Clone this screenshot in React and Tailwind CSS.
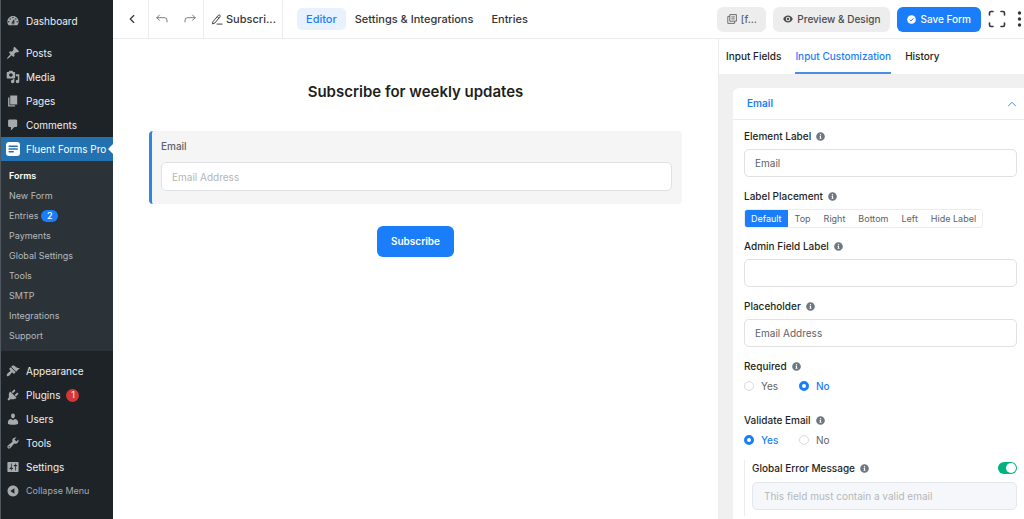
import React, { useState } from "react";
import clsx from "clsx";
import { FaInfoCircle } from "react-icons/fa";
import { FiChevronLeft, FiChevronUp } from "react-icons/fi";

const icons = {
  dashboard:
    "M3.76 16h12.48c1.1-1.37 1.76-3.11 1.76-5 0-4.42-3.58-8-8-8s-8 3.58-8 8c0 1.89.66 3.63 1.76 5zM10 4c.55 0 1 .45 1 1s-.45 1-1 1-1-.45-1-1 .45-1 1-1zM6 6c.55 0 1 .45 1 1s-.45 1-1 1-1-.45-1-1 .45-1 1-1zm8 0c.55 0 1 .45 1 1s-.45 1-1 1-1-.45-1-1 .45-1 1-1zm-5.37 5.55L12 7v6c0 1.1-.9 2-2 2s-2-.9-2-2c0-.57.24-1.08.63-1.45zM4 10c.55 0 1 .45 1 1s-.45 1-1 1-1-.45-1-1 .45-1 1-1zm12 0c.55 0 1 .45 1 1s-.45 1-1 1-1-.45-1-1 .45-1 1-1zm-5 3c0-.55-.45-1-1-1s-1 .45-1 1 .45 1 1 1 1-.45 1-1z",
  posts:
    "M10.44 3.02l1.82-1.82 6.36 6.35-1.83 1.82c-1.05-.68-2.48-.57-3.41.36l-.75.75c-.92.93-1.04 2.35-.35 3.41l-1.83 1.82-2.41-2.41-2.8 2.79c-.42.42-3.38 2.71-3.8 2.29s1.86-3.39 2.28-3.81l2.79-2.79L4.1 9.36l1.83-1.82c1.05.69 2.48.57 3.4-.36l.75-.75c.93-.92 1.05-2.35.36-3.41z",
  media:
    "M13 11V4c0-.55-.45-1-1-1h-1.67L9 1H5L3.67 3H2c-.55 0-1 .45-1 1v7c0 .55.45 1 1 1h10c.55 0 1-.45 1-1zM7 4.5c1.38 0 2.5 1.12 2.5 2.5S8.38 9.5 7 9.5 4.5 8.38 4.5 7 5.62 4.5 7 4.5zM14 6h5v10.5c0 1.38-1.12 2.5-2.5 2.5S14 17.88 14 16.5s1.12-2.5 2.5-2.5c.17 0 .34.02.5.05V9h-3V6zm-4 8.05V13h2v3.5c0 1.38-1.12 2.5-2.5 2.5S7 17.88 7 16.5 8.12 14 9.5 14c.17 0 .34.02.5.05z",
  pages: "M6 15V2h10v13H6zm-1 1h8v2H3V5h2v11z",
  comments:
    "M5 2h9c1.1 0 2 .9 2 2v7c0 1.1-.9 2-2 2h-2l-5 5v-5H5c-1.1 0-2-.9-2-2V4c0-1.1.9-2 2-2z",
  appearance:
    "M14.48 11.06L7.41 3.99l1.5-1.5c.5-.56 2.3-.47 3.51.32 1.21.8 1.43 1.28 2.91 2.1 1.18.64 2.45 1.26 4.45.85zm-.71.71L6.7 4.7 4.93 6.47c-.39.39-.39 1.02 0 1.41l1.06 1.06c.39.39.39 1.03 0 1.42-.6.6-1.43 1.11-2.21 1.69-.35.26-.7.53-1.01.84C1.43 14.23.4 16.08 1.4 17.07c.99 1 2.84-.03 4.18-1.36.31-.31.58-.66.85-1.02.57-.78 1.08-1.61 1.69-2.21.39-.39 1.02-.39 1.41 0l1.06 1.06c.39.39 1.02.39 1.41 0z",
  plugins:
    "M13.11 4.36L9.87 7.6 8 5.73l3.24-3.24c.35-.34 1.05-.2 1.56.32.52.51.66 1.21.31 1.55zm-8 1.77l.91-1.12 9.01 9.01-1.19.84c-.71.71-2.63 1.16-3.82 1.16H6.14L4.9 17.26c-.59.59-1.54.59-2.12 0-.59-.58-.59-1.53 0-2.12l1.24-1.24v-3.88c0-1.13.4-3.19 1.09-3.89zm7.26 3.97l3.24-3.24c.34-.35 1.04-.21 1.55.31.52.51.66 1.21.31 1.55l-3.24 3.25z",
  users:
    "M10 9.25c-2.27 0-2.73-3.44-2.73-3.44C7 4.02 7.82 2 9.97 2c2.16 0 2.98 2.02 2.71 3.81 0 0-.41 3.44-2.68 3.44zm0 2.57L12.72 10c2.39 0 4.52 2.33 4.52 4.53v2.49s-3.65 1.13-7.24 1.13c-3.65 0-7.24-1.13-7.24-1.13v-2.49c0-2.25 1.94-4.48 4.47-4.48z",
  tools:
    "M16.68 9.77c-1.34 1.34-3.3 1.67-4.95.99l-5.41 6.52c-.99.99-2.59.99-3.58 0s-.99-2.59 0-3.57l6.52-5.42c-.68-1.65-.35-3.61.99-4.95 1.28-1.28 3.12-1.62 4.72-1.06l-2.89 2.89 2.82 2.82 2.86-2.87c.53 1.58.18 3.39-1.08 4.65zM3.81 16.21c.4.39 1.04.39 1.43 0 .4-.4.4-1.04 0-1.43-.39-.4-1.03-.4-1.43 0-.39.39-.39 1.03 0 1.43z",
  settings:
    "M18 16V4c0-.55-.45-1-1-1H3c-.55 0-1 .45-1 1v12c0 .55.45 1 1 1h14c.55 0 1-.45 1-1zM8 11h1c.55 0 1 .45 1 1s-.45 1-1 1H8v1.5c0 .28-.22.5-.5.5s-.5-.22-.5-.5V13H6c-.55 0-1-.45-1-1s.45-1 1-1h1V5.5c0-.28.22-.5.5-.5s.5.22.5.5V11zm5-2h-1c-.55 0-1-.45-1-1s.45-1 1-1h1V5.5c0-.28.22-.5.5-.5s.5.22.5.5V7h1c.55 0 1 .45 1 1s-.45 1-1 1h-1v5.5c0 .28-.22.5-.5.5s-.5-.22-.5-.5V9z",
  collapse:
    "M10 2.16c4.33 0 7.84 3.51 7.84 7.84s-3.51 7.84-7.84 7.84S2.16 14.33 2.16 10 5.71 2.16 10 2.16zm2 11.72V6.12L6.18 9.97z",
};

const topMenu = [
  { icon: "posts", label: "Posts" },
  { icon: "media", label: "Media" },
  { icon: "pages", label: "Pages" },
  { icon: "comments", label: "Comments" },
];

const subMenu = [
  { label: "Forms", active: true },
  { label: "New Form" },
  { label: "Entries", count: 2 },
  { label: "Payments" },
  { label: "Global Settings" },
  { label: "Tools" },
  { label: "SMTP" },
  { label: "Integrations" },
  { label: "Support" },
];

const bottomMenu = [
  { icon: "appearance", label: "Appearance" },
  { icon: "plugins", label: "Plugins", count: 1 },
  { icon: "users", label: "Users" },
  { icon: "tools", label: "Tools" },
  { icon: "settings", label: "Settings" },
];

const placements = ["Default", "Top", "Right", "Bottom", "Left", "Hide Label"];

function DashIcon({ name }) {
  return (
    <svg viewBox="0 0 20 20" className="size-[14px] shrink-0 fill-[#a7aaad]" aria-hidden="true">
      <path fillRule="evenodd" d={icons[name]} />
    </svg>
  );
}

function MenuItem({ icon, label, count }) {
  return (
    <a href="#" className="flex h-6 items-center gap-[6px] pl-[5px] text-[10px] text-[#f0f0f1]">
      <DashIcon name={icon} />
      {label}
      {count && (
        <span className="flex size-[13px] items-center justify-center rounded-full bg-[#d63638] text-[9px] text-white">
          {count}
        </span>
      )}
    </a>
  );
}

function Sidebar() {
  return (
    <nav className="w-[113px] shrink-0 border-l border-[#50575e] bg-[#1d2327] pt-[9px]">
      <MenuItem icon="dashboard" label="Dashboard" />
      <div className="mt-2">
        {topMenu.map((item) => (
          <MenuItem key={item.label} {...item} />
        ))}
      </div>

      <a
        href="#"
        className="relative flex h-6 items-center gap-[6px] bg-[#2271b1] pl-[5px] text-[10px] text-white"
      >
        <svg viewBox="0 0 14 14" className="size-[14px] shrink-0" aria-hidden="true">
          <rect width="14" height="14" rx="3" fill="#fff" />
          <path
            d="M3.2 4.2h8M3.2 7h8M3.2 9.8h4"
            stroke="#2271b1"
            strokeWidth="1.6"
            strokeLinecap="round"
          />
        </svg>
        <span className="whitespace-nowrap">Fluent Forms Pro</span>
        <span className="absolute top-[7px] right-0 border-y-5 border-r-5 border-y-transparent border-r-white" />
      </a>
      <div className="bg-[#2c3338] pt-[5px] pb-[5px]">
        {subMenu.map((item) => (
          <a
            key={item.label}
            href="#"
            className={clsx(
              "flex h-5 items-center gap-[3px] pl-2 text-[9px]",
              item.active ? "font-semibold text-white" : "text-[#b4b9be]"
            )}
          >
            {item.label}
            {item.count && (
              <span className="flex h-3 w-[17px] items-center justify-center rounded-full bg-[#1a7efb] text-[9px] font-medium text-white">
                {item.count}
              </span>
            )}
          </a>
        ))}
      </div>

      <div className="mt-2">
        {bottomMenu.map((item) => (
          <MenuItem key={item.label} {...item} />
        ))}
      </div>
      <button
        type="button"
        className="flex h-6 w-full items-center gap-[6px] pl-[5px] text-[9px] text-[#a7aaad]"
      >
        <DashIcon name="collapse" />
        Collapse Menu
      </button>
    </nav>
  );
}

function HistoryArrow({ className }) {
  return (
    <svg
      viewBox="0 0 12 10"
      className={clsx("h-[10px] w-3", className)}
      fill="none"
      stroke="currentColor"
      strokeLinecap="round"
      strokeLinejoin="round"
      aria-hidden="true"
    >
      <path d="M3.5 1L.8 3.700l2.700 2.700M.8 3.700h7.700a2.500 2.500 0 0 1 2.500 2.500V8" />
    </svg>
  );
}

function Header() {
  return (
    <header className="flex h-[39px] items-stretch border-b border-[#ececec] text-[11px] font-medium text-[#353537]">
      <button
        type="button"
        aria-label="Back"
        className="flex w-9 items-center justify-center border-r border-[#ececec] pl-[3px]"
      >
        <FiChevronLeft className="size-[14px]" />
      </button>
      <div className="flex w-[55px] items-center justify-between border-r border-[#ececec] px-[7px] text-[#7a7c80]">
        <button type="button" aria-label="Undo">
          <HistoryArrow />
        </button>
        <button type="button" aria-label="Redo">
          <HistoryArrow className="-scale-x-100" />
        </button>
      </div>
      <button
        type="button"
        className="flex w-[79px] items-center gap-[3px] border-r border-[#ececec] pl-2"
      >
        <svg
          viewBox="0 0 12 12"
          className="size-[11px]"
          fill="none"
          stroke="currentColor"
          strokeLinejoin="round"
          strokeLinecap="round"
          aria-hidden="true"
        >
          <path d="M1.2 8.2L6.9 1.4a1.2 1.2 0 0 1 1.8 1.6L3.2 9.8l-2.3.9zM5.8 3l1.7 1.5M5.5 11h5.5" />
        </svg>
        Subscri...
      </button>

      <nav className="ml-[14px] flex items-center">
        <a href="#" className="rounded-[5px] bg-[#e8f2ff] px-[9px] py-[3px] text-[#1a7efb]">
          Editor
        </a>
        <a href="#" className="px-[9px]">
          Settings &amp; Integrations
        </a>
        <a href="#" className="px-[9px]">
          Entries
        </a>
      </nav>

      <div className="ml-auto flex items-center gap-[7px] pr-[2px] text-[10px]">
        <button
          type="button"
          className="flex h-[25px] w-[49px] items-center justify-center gap-1 rounded-md bg-[#ededed] text-[#606266]"
        >
          <svg
            viewBox="0 0 10 10"
            className="size-[10px]"
            fill="none"
            stroke="currentColor"
            strokeWidth="0.9"
            aria-hidden="true"
          >
            <path d="M2.8.6h6.6v6.6H2.8zM2.8 2.4H.8v7h6.8V7.3M4.4 2.9h3.4M4.4 4.9h3.4" />
          </svg>
          [f...
        </button>
        <button
          type="button"
          className="flex h-[25px] items-center gap-1 rounded-md bg-[#ededed] px-[10px] text-[#4b4c4d]"
        >
          <svg viewBox="0 0 10 8" className="h-2 w-[10px]" fill="currentColor" aria-hidden="true">
            <path
              fillRule="evenodd"
              d="M5 .6C2.700.600 1 2 .2 4 1 6 2.700 7.400 5 7.400S9 6 9.800 4C9 2 7.300.600 5 .600zM5 1.800a2.200 2.200 0 1 1 0 4.400 2.200 2.200 0 0 1 0-4.400zM5 2.800a1.200 1.200 0 1 0 0 2.400 1.200 1.200 0 0 0 0-2.400z"
            />
          </svg>
          Preview &amp; Design
        </button>
        <button
          type="button"
          className="flex h-[25px] items-center gap-1 rounded-md bg-[#1a7efb] px-[10px] text-white"
        >
          <svg viewBox="0 0 10 10" className="size-[9px]" aria-hidden="true">
            <circle cx="5" cy="5" r="4.8" fill="#fff" />
            <path d="M2.900 5.100l1.500 1.500L7.200 3.600" fill="none" stroke="#1a7efb" strokeWidth="1.1" />
          </svg>
          Save Form
        </button>
        <button type="button" aria-label="Fullscreen">
          <svg
            viewBox="0 0 18 18"
            className="size-[18px]"
            fill="none"
            stroke="currentColor"
            strokeWidth="1.6"
            strokeLinecap="round"
            aria-hidden="true"
          >
            <path d="M1.500 5V3a1.500 1.500 0 0 1 1.500-1.500h2M13 1.500H15A1.500 1.500 0 0 1 16.500 3v2M16.500 13V15a1.500 1.500 0 0 1-1.500 1.500h-2M5 16.500H3A1.500 1.500 0 0 1 1.500 15v-2" />
          </svg>
        </button>
        <button type="button" aria-label="More" className="pl-1">
          <svg viewBox="0 0 5 16" className="h-4 w-[5px]" fill="currentColor" aria-hidden="true">
            <circle cx="2.500" cy="2" r="1.700" />
            <circle cx="2.500" cy="8" r="1.700" />
            <circle cx="2.500" cy="14" r="1.700" />
          </svg>
        </button>
      </div>
    </header>
  );
}

function FormPreview() {
  return (
    <main className="flex-1 px-9 pt-[43px]">
      <h1 className="text-center text-[15px] leading-5 font-semibold text-[#1e1f21]">
        Subscribe for weekly updates
      </h1>
      <div className="mt-[29px] rounded-sm border-l-3 border-[#2b86e6] bg-[#f5f5f5] pt-[7px] pr-[10px] pb-[13px] pl-[9px]">
        <label htmlFor="preview-email" className="block text-[10px] leading-4 font-medium text-[#606266]">
          Email
        </label>
        <input
          id="preview-email"
          type="email"
          placeholder="Email Address"
          className="mt-2 block h-[29px] w-full rounded-[5px] border border-[#e0e1e3] bg-white px-[10px] text-[10px] outline-none placeholder:text-[#b4b5b8]"
        />
      </div>
      <button
        type="button"
        className="mx-auto mt-[22px] block h-[31px] rounded-md bg-[#1a7efb] px-[14px] text-[10px] font-semibold text-white"
      >
        Subscribe
      </button>
    </main>
  );
}

function FieldLabel({ htmlFor, children }) {
  return (
    <div className="flex h-4 items-center gap-[5px] text-[10px] font-medium text-[#1e1f21]">
      {htmlFor ? <label htmlFor={htmlFor}>{children}</label> : <span>{children}</span>}
      <FaInfoCircle className="size-[9px] text-[#6f7782]" />
    </div>
  );
}

function TextField({ id, label, value }) {
  return (
    <div>
      <FieldLabel htmlFor={id}>{label}</FieldLabel>
      <input
        id={id}
        type="text"
        defaultValue={value}
        className="mt-[5px] block h-7 w-full rounded-[5px] border border-[#e0e1e3] bg-white px-[10px] text-[10px] text-[#606266] outline-none"
      />
    </div>
  );
}

function YesNoField({ name, label, value, onChange }) {
  return (
    <div>
      <FieldLabel>{label}</FieldLabel>
      <div role="radiogroup" aria-label={label} className="mt-1 flex h-4">
        {["Yes", "No"].map((option) => (
          <label
            key={option}
            className={clsx(
              "flex w-[55px] items-center gap-[7px] text-[10px]",
              value === option ? "font-medium text-[#1a7efb]" : "text-[#606266]"
            )}
          >
            <input
              type="radio"
              name={name}
              checked={value === option}
              onChange={() => onChange(option)}
              className="size-[10px] appearance-none rounded-full border border-[#dadbdd] bg-white checked:border-3 checked:border-[#1a7efb]"
            />
            {option}
          </label>
        ))}
      </div>
    </div>
  );
}

function SettingsPanel() {
  const [placement, setPlacement] = useState("Default");
  const [required, setRequired] = useState("No");
  const [validate, setValidate] = useState("Yes");
  const [globalMessage, setGlobalMessage] = useState(true);

  return (
    <aside className="flex w-[306px] shrink-0 flex-col border-l border-[#ececec] bg-[#f0f0f1]">
      <nav className="flex h-[35px] gap-[14px] bg-white pl-[7px] text-[10px] font-medium text-[#1e1f21]">
        <a href="#" className="flex items-center">
          Input Fields
        </a>
        <a href="#" className="flex items-center border-b-2 border-[#4a90e2] pt-[2px] text-[#1a7efb]">
          Input Customization
        </a>
        <a href="#" className="flex items-center">
          History
        </a>
      </nav>

      <section className="mt-[14px] ml-[14px] flex-1 rounded-tl-md bg-white">
        <button
          type="button"
          className="flex h-8 w-full items-center justify-between border-b border-[#ececec] pr-[5px] pl-[14px] text-[10px] font-semibold text-[#1a7efb]"
        >
          Email
          <FiChevronUp className="size-[14px]" strokeWidth={1.5} />
        </button>

        <div className="pt-2 pr-[7px] pl-[11px]">
          <TextField id="element-label" label="Element Label" value="Email" />

          <div className="mt-[11px]">
            <FieldLabel>Label Placement</FieldLabel>
            <div
              role="radiogroup"
              aria-label="Label Placement"
              className="mt-[5px] flex h-[19px] w-fit gap-px overflow-hidden rounded-[3px] border border-[#ececec]"
            >
              {placements.map((option) => (
                <label
                  key={option}
                  className={clsx(
                    "relative flex items-center px-[6px] text-[9px]",
                    placement === option ? "bg-[#1a7efb] text-white" : "text-[#606266]"
                  )}
                >
                  <input
                    type="radio"
                    name="placement"
                    checked={placement === option}
                    onChange={() => setPlacement(option)}
                    className="sr-only"
                  />
                  {option}
                </label>
              ))}
            </div>
          </div>

          <div className="mt-[10px] space-y-[11px]">
            <TextField id="admin-label" label="Admin Field Label" value="" />
            <TextField id="placeholder" label="Placeholder" value="Email Address" />
          </div>

          <div className="mt-[11px] space-y-[18px]">
            <YesNoField name="required" label="Required" value={required} onChange={setRequired} />
            <YesNoField name="validate" label="Validate Email" value={validate} onChange={setValidate} />
          </div>

          <div className="mt-3 border-l border-[#ececec] pb-[6px] pl-[7px]">
            <div className="flex items-center justify-between">
              <FieldLabel htmlFor="error-message">Global Error Message</FieldLabel>
              <input
                type="checkbox"
                role="switch"
                aria-label="Use global error message"
                checked={globalMessage}
                onChange={(e) => setGlobalMessage(e.target.checked)}
                className="flex h-3 w-[19px] appearance-none items-center rounded-full bg-[#c8c9cc] px-px before:size-[10px] before:rounded-full before:bg-white checked:justify-end checked:bg-[#00b27f]"
              />
            </div>
            <input
              id="error-message"
              type="text"
              disabled={globalMessage}
              defaultValue="This field must contain a valid email"
              className="mt-[6px] block h-7 w-full rounded-[5px] border border-[#e4e7ed] bg-[#f5f7fa] px-[11px] text-[10px] text-[#b4b7bd] outline-none"
            />
          </div>
        </div>
      </section>
    </aside>
  );
}

export default function App() {
  return (
    <div className="flex min-h-screen bg-white font-['Inter',sans-serif]">
      <Sidebar />
      <div className="flex min-w-0 flex-1 flex-col">
        <Header />
        <div className="flex flex-1">
          <FormPreview />
          <SettingsPanel />
        </div>
      </div>
    </div>
  );
}
